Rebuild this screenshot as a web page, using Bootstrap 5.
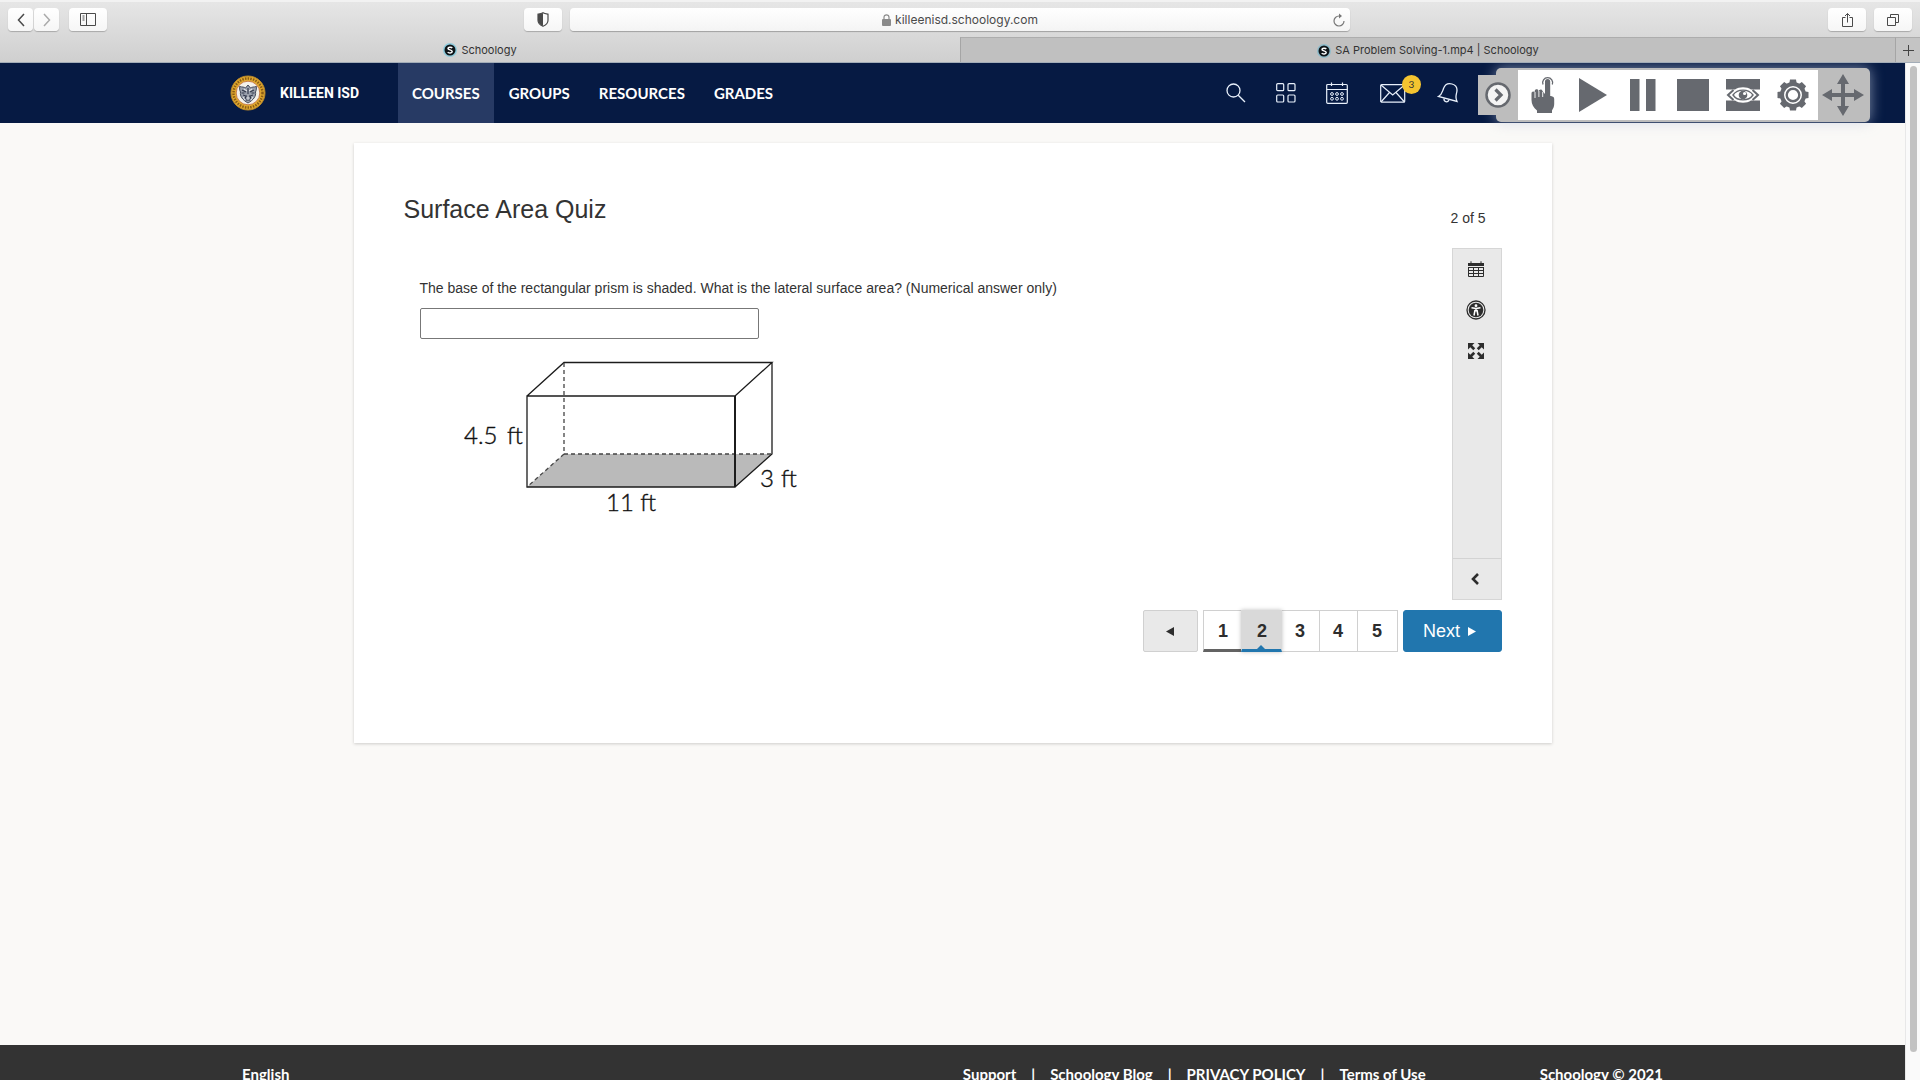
<!DOCTYPE html>
<html lang="en">
<head>
<meta charset="utf-8">
<meta name="viewport" content="width=device-width, initial-scale=1">
<title>Schoology</title>
<link href="https://cdn.jsdelivr.net/npm/bootstrap@5.3.0/dist/css/bootstrap.min.css" rel="stylesheet">
<style>
  body { font-family: "Liberation Sans", Arial, sans-serif; background: #faf9f7; color: #333; }
  button { font-family: inherit; }
  svg { display: block; flex: none; }

  /* Browser chrome */
  .chrome { font-family: Inter, "Liberation Sans", sans-serif; background: linear-gradient(#e6e6e6, #cfcfcf); border-bottom: 1px solid #a3adb8; border-top: 2px solid #f2f2f2; }
  .chrome-bar { height: 35px; padding: 0 8px; }
  .chrome-side { flex: 1 1 0; }
  .chrome-btn { height: 23px; border: 0; border-radius: 4px; padding: 0; background: linear-gradient(#fff, #f6f6f6); box-shadow: 0 1px 1px #a8a8a8; color: #4a4a4a; display: flex; align-items: center; justify-content: center; width: 38px; }
  .chrome-btn.step { width: 25px; margin-right: 1px; }
  .chrome-btn.panel { margin-left: 9px; }
  .address { width: 41%; height: 23px; border-radius: 4px; background: linear-gradient(#fff, #f4f4f4); box-shadow: 0 1px 1px #a0a0a0; font-size: 12px; color: #4a4a4a; }
  .address a { color: inherit; }
  .tabs { height: 25px; font-size: 11px; }
  .tabs a { color: #333; padding-top: 1px; }
  .tab-on { width: 50%; }
  .tab-off { background: #c0c0c0; border-left: 1px solid #a5a5a5; border-top: 1px solid #adadad; }
  .tab-add { width: 25px; background: #c4c4c4; border: 0; border-top: 1px solid #adadad; border-left: 1px solid #a5a5a5; color: #444; padding: 0; }

  /* Page area and its scrollbar */
  .app { height: 100vh; }
  .track { width: 15px; background: #fafafa; border-left: 1px solid #e8e8e8; padding: 3px 3px 28px 4px; }
  .thumb { background: #c2c2c2; border-radius: 4px; height: 100%; }

  /* Site header */
  .site-head { background: #061a43; height: 60px; font-family: Lato, "Open Sans", sans-serif; font-size: 15px; font-weight: 700; }
  .site-head .inner { width: 1445px; max-width: 100%; }
  .brand { color: #fff; font-family: Roboto, sans-serif; font-size: 14px; width: 168px; gap: 14px; }
  .site-head .nav-link { color: #fff; padding: 0 14px; display: flex; align-items: center; }
  .site-head .nav-link.active { background: #273a64; }
  .site-head .nav { gap: 1px; }
  .tool-icons { margin-right: 216px; gap: 30px; }
  .tool-icons button { border: 0; background: none; padding: 0; color: #e8f0fb; }
  .tool-icons .mail { margin: 0 1px 0 2px; }
  .count { width: 19px; height: 19px; border-radius: 50%; background: #f4c430; color: #333; font-size: 10px; top: -9px; right: -15px; }

  /* Floating playback palette */
  .palette { right: 35px; top: 5px; height: 54px; border-radius: 5px; background: #bdbdbd; box-shadow: 0 0 14px rgba(190,200,220,.65); color: #66696f; z-index: 5; }
  .palette button { border: 0; padding: 0; color: inherit; width: 50px; height: 50px; background: #fff; display: flex; align-items: center; justify-content: center; }
  .palette .fold { width: 40px; height: 40px; background: #bdbdbd; margin-left: -18px; }
  .palette .drag { width: 52px; background: transparent; padding-right: 2px; }

  /* Quiz */
  .stage { height: calc(100vh - 158px); padding-top: 20px; }
  .quiz { width: 1198px; max-width: 100%; min-height: 600px; background: #fff; box-shadow: 0 1px 3px rgba(0,0,0,.18); padding: 50px 50px 0; }
  .quiz h1 { font-size: 25px; line-height: 32px; font-weight: 400; }
  .counter { font-size: 14px; line-height: 20px; padding: 15px 16px 0 0; }
  .question { padding: 53px 0 0 16px; font-size: 14px; line-height: 20px; }
  .answer { width: 339px; height: 31px; border: 1px solid #777; border-radius: 2px; margin-top: 10px; }
  .rail { width: 50px; height: 352px; background: #e9e9e9; border: 1px solid #d6d6d6; margin-top: 20px; }
  .rail button { border: 0; background: none; width: 46px; height: 41px; padding: 0 0 2px; display: flex; align-items: center; justify-content: center; color: #2d2d2d; }
  .rail .collapse-btn { border-top: 1px solid #d3d3d3; width: 48px; padding: 0 3px 0 0; }
  .pager { gap: 5px; margin-top: 10px; }
  .pager button { height: 42px; border: 1px solid #d0d0d0; background: #fff; font-size: 18px; color: #2d2d2d; padding: 0; }
  .pager .prev { width: 55px; background: #e9e9e9; border-radius: 2px; }
  .pager .next { width: 99px; background: #2176ae; border-color: #2176ae; color: #fff; border-radius: 3px; gap: 8px; padding-right: 5px; }
  .pager .num { width: 39px; font-weight: 700; margin-right: -1px; }
  .pager .num:last-child { width: 41px; margin-right: 0; }
  .pager .seen { border-bottom: 3px solid #636363; padding: 2px 0 0 2px; }
  .pager .now { width: 41px; background: #d9d9d9; border-color: #d9d9d9; border-bottom: 3px solid #2176ae; padding: 2px 0 0 2px; box-shadow: 0 0 4px rgba(0,0,0,.25); }
  .pager .now::after { content: ""; position: absolute; left: 50%; bottom: 0; margin-left: -4px; border: 4px solid transparent; border-top: 0; border-bottom-color: #2176ae; }

  /* Footer */
  .site-foot { background: #333; padding-top: 19px; height: 80px; font-family: Lato, "Open Sans", sans-serif; font-size: 15px; line-height: 20px; font-weight: 700; color: #fff; }
  .site-foot .inner { width: 1421px; max-width: 100%; }
  .site-foot a { color: inherit; }
  .foot-links { gap: 15px; margin-right: 114px; }
</style>
</head>
<body>
<div class="app d-flex flex-column overflow-hidden">

  <header class="chrome flex-shrink-0">
    <div class="chrome-bar d-flex align-items-center gap-2">
      <div class="chrome-side d-flex align-items-center">
        <button class="chrome-btn step" aria-label="Back"><svg width="8" height="14" fill="none" stroke="currentColor" stroke-width="1.500"><path d="M7 1 1.500 7 7 13"/></svg></button>
        <button class="chrome-btn step" aria-label="Forward"><svg width="8" height="14" fill="none" stroke="#aaa" stroke-width="1.500"><path d="M1 1 6.500 7 1 13"/></svg></button>
        <button class="chrome-btn panel" aria-label="Show sidebar"><svg width="16" height="13" fill="none" stroke="currentColor"><path d="M.5.5h15v12H.5zM6.500.5v12M2.500 3h2M2.500 5h2M2.500 7h2"/></svg></button>
        <button class="chrome-btn ms-auto" aria-label="Privacy report"><svg width="12" height="15" viewBox="0 0 12 15"><path d="M6 .8C4.500 1.800 2.500 2 1 2.200v6C1 11 3.500 13.200 6 14.300c2.500-1.100 5-3.300 5-6.100v-6C9.500 2 7.500 1.800 6 .8z" fill="none" stroke="currentColor" stroke-width="1.200"/><path d="M6 1v13C3.500 13 1 11 1 8.200v-6C2.500 2 4.500 1.800 6 1z" fill="currentColor"/></svg></button>
      </div>
      <div class="address d-flex align-items-center justify-content-center position-relative">
        <svg width="9" height="12" class="me-1"><rect y="5" width="9" height="7" rx="1" fill="#8a8a8a"/><path d="M2 5.500V3.300a2.500 2.500 0 0 1 5 0v2.200" fill="none" stroke="#8a8a8a" stroke-width="1.200"/></svg>
        <a href="#" class="text-decoration-none">killeenisd.schoology.com</a>
        <button class="border-0 bg-transparent p-0 position-absolute end-0 me-1" aria-label="Reload"><svg width="14" height="14" fill="none" stroke="#777" stroke-width="1.200"><path d="M12 8A5 5 0 1 1 7 3h2"/><path d="M7 .5 10 3 7 5.500z" fill="#777" stroke="none"/></svg></button>
      </div>
      <div class="chrome-side d-flex justify-content-end gap-2">
        <button class="chrome-btn" aria-label="Share"><svg width="13" height="16" fill="none" stroke="currentColor"><path d="M4.500 5.500h-3v9h10v-9h-3M6.500 10.500V1.500M4 4l2.500-2.500L9 4"/></svg></button>
        <button class="chrome-btn" aria-label="Tab overview"><svg width="14" height="14" fill="none" stroke="currentColor"><path d="M1.500 4.500h8v8h-8zM4.500 4.500v-3h8v8h-3"/></svg></button>
      </div>
    </div>
    <nav class="tabs d-flex" aria-label="Browser tabs">
      <a href="#" class="tab-on text-decoration-none d-flex align-items-center justify-content-center">
        <svg width="14" height="14" class="me-1" viewBox="0 0 14 14"><circle cx="7" cy="7" r="7" fill="#8fcbdc"/><circle cx="7" cy="7" r="5.500" fill="#0d1418"/><path d="M9.200 5C8.500 3.800 5 3.800 5 5.500 5 7.200 9.200 6.500 9.200 8.500 9.200 10.300 5.500 10.300 4.800 9" fill="none" stroke="#fff" stroke-width="1.500"/></svg>
        <span>Schoology</span></a>
      <a href="#" class="tab-off text-decoration-none flex-fill d-flex align-items-center justify-content-center">
        <svg width="14" height="14" class="me-1" viewBox="0 0 14 14"><circle cx="7" cy="7" r="7" fill="#8fbccb"/><circle cx="7" cy="7" r="5.500" fill="#0d1418"/><path d="M9.200 5C8.500 3.800 5 3.800 5 5.500 5 7.200 9.200 6.500 9.200 8.500 9.200 10.300 5.500 10.300 4.800 9" fill="none" stroke="#fff" stroke-width="1.500"/></svg>
        <span>SA Problem Solving-1.mp4 | Schoology</span></a>
      <button class="tab-add d-flex align-items-center justify-content-center" aria-label="New tab"><svg width="11" height="11" stroke="currentColor"><path d="M0 5.500h11M5.500 0v11"/></svg></button>
    </nav>
  </header>

  <div class="d-flex flex-fill overflow-hidden">
    <div class="flex-fill position-relative overflow-hidden">

      <header class="site-head">
        <div class="inner mx-auto h-100 d-flex">
          <a href="#" class="brand d-flex align-items-center text-decoration-none">
            <svg width="36" height="36" viewBox="0 0 36 36">
              <circle cx="18" cy="18" r="17" fill="#e0a92e" stroke="#b9872a" stroke-width="1"/>
              <circle cx="18" cy="18" r="14.500" fill="none" stroke="#8a5c17" stroke-width="2.500" stroke-dasharray="1.500 1.200"/>
              <circle cx="18" cy="18" r="11.800" fill="#f4f1ea" stroke="#c06a3a" stroke-width=".8"/>
              <path d="M9.500 11.500c3 .8 4.500.3 6 1.500L18 10l2.500 3c1.500-1.200 3-.7 6-1.500-.3 2 .2 3-1 5.500.8 4-2 8-7.500 11-5.500-3-8.300-7-7.500-11-1.200-2.500-.7-3.500-1-5.500z" fill="#9aa0ac" stroke="#454b5c"/>
              <path d="M12 15l4 2M24 15l-4 2M18 13v6M13 20l3 1-1 3M23 20l-3 1 1 3M15.500 21h5M16 25h4M11.500 18h3M21.500 18h3" stroke="#30364a" stroke-width="1.100" fill="none"/>
              <path d="M14 14l3 2M22 14l-3 2M18 20v5M13 22l2 3M23 22l-2 3" stroke="#fff" stroke-width=".8"/>
            </svg>
            <span>KILLEEN ISD</span>
          </a>
          <nav class="nav h-100">
            <a class="nav-link active" href="#">COURSES</a>
            <a class="nav-link" href="#">GROUPS</a>
            <a class="nav-link" href="#">RESOURCES</a>
            <a class="nav-link" href="#">GRADES</a>
          </nav>
          <div class="tool-icons ms-auto d-flex align-items-center">
            <button aria-label="Search"><svg width="20" height="20" fill="none" stroke="currentColor" stroke-width="1.300"><circle cx="7.500" cy="7.500" r="6.500"/><path d="M12.200 12.200 19 19"/></svg></button>
            <button aria-label="Apps"><svg width="20" height="20" fill="none" stroke="currentColor" stroke-width="1.200"><rect x=".7" y=".7" width="7" height="7" rx="1"/><rect x="12" y=".7" width="7" height="7" rx="1"/><rect x=".7" y="12" width="7" height="7" rx="1"/><rect x="12" y="12" width="7" height="7" rx="1"/></svg></button>
            <button aria-label="Calendar"><svg width="22" height="22" fill="none" stroke="currentColor" stroke-width="1.200"><rect x=".7" y="2.500" width="20.600" height="18.800" rx="1"/><path d="M.7 7.500h20.600M5.500.5v3.500M16.500.5v3.500"/><g stroke-width="1"><circle cx="6" cy="12" r="1.400"/><circle cx="11" cy="12" r="1.400"/><circle cx="16" cy="12" r="1.400"/><circle cx="6" cy="16.800" r="1.400"/><circle cx="11" cy="16.800" r="1.400"/><circle cx="16" cy="16.800" r="1.400"/></g></svg></button>
            <button class="mail position-relative" aria-label="Messages, 3 unread"><svg width="26" height="19" fill="none" stroke="currentColor" stroke-width="1.200"><rect x=".7" y=".7" width="24" height="17.500" rx="1"/><path d="M1 1l11.700 10L24.500 1M1 18l8.500-9.500M24.500 18 16 8.500"/></svg><span class="count position-absolute d-flex align-items-center justify-content-center">3</span></button>
            <button aria-label="Notifications"><svg width="22" height="22" viewBox="0 0 22 22" fill="none" stroke="currentColor" stroke-width="1.300"><path d="M1.500 14.500C5 12.500 5 10.500 6.500 6.500 8 2.500 11.500 1 15 2c3.800 1 5.500 4.200 4.800 8-.8 4-1.800 5.500.2 9.500z"/><path d="M7 16.500c-.3 3.500 3.500 4.500 5 1.500"/></svg></button>
          </div>
        </div>
      </header>

      <div class="palette position-absolute d-flex align-items-center" role="toolbar" aria-label="Playback">
        <button class="fold" aria-label="Collapse"><svg width="26" height="26" fill="#f4f4f4" stroke="currentColor" stroke-width="2.500"><circle cx="13" cy="13" r="11.500"/><path d="M10.500 7.500 16 13l-5.500 5.500" fill="none" stroke-width="3.200"/></svg></button>
        <button aria-label="Touch"><svg width="26" height="38" viewBox="0 0 26 38" fill="currentColor"><path d="M15 18V5.500a2.600 2.600 0 0 1 5.200 0V20c2 .2 4 .5 4 3v5c0 3-1.200 4.500-2.200 6.500V37H7v-2.500C3.500 32 1.500 28 1.500 24v-6.500c0-1.200.6-2 1.800-2l1.400.5v-1c.3-2.200 3.200-2.200 3.700-.3l.4.8c.2-2.500 3.300-2.700 3.800-.2z"/><path d="M5 16v6M8.900 15v6M12.700 16v5" stroke="#fff" stroke-width=".9"/><path d="M13 8.500a5 5 0 1 1 9.300 0" fill="none" stroke="currentColor" stroke-width="1.300"/></svg></button>
        <button aria-label="Play"><svg width="28" height="34" fill="currentColor"><path d="M0 0 28 17 0 34z"/></svg></button>
        <button aria-label="Pause"><svg width="26" height="32" fill="currentColor"><path d="M0 0h9.500v32H0zM16 0h9.500v32H16z"/></svg></button>
        <button aria-label="Stop"><svg width="32" height="32" fill="currentColor"><path d="M0 0h32v32H0z"/></svg></button>
        <button aria-label="Watch"><svg width="34" height="32"><path d="M0 0h34v32H0z" fill="currentColor"/><path d="M0 10.500h9c4-3 12-3 16 0h9v11h-9c-4 3-12 3-16 0H0z" fill="#fff"/><path d="M7.500 11 2 16l5.500 5M26.500 11l5.500 5-5.500 5" fill="none" stroke="currentColor" stroke-width="2"/><path d="M7 16c4.500-6.500 15.500-6.500 20 0-4.500 6.500-15.500 6.500-20 0z" fill="#fff" stroke="currentColor" stroke-width="1.400"/><circle cx="17" cy="16" r="4.300" fill="currentColor"/><circle cx="18.600" cy="14.500" r="1.600" fill="#fff"/></svg></button>
        <button aria-label="Settings"><svg width="32" height="32" viewBox="-16 -16 32 32"><g fill="none" stroke="currentColor"><circle r="11" stroke-width="4"/><circle r="6.300" stroke-width="2.400"/></g><g fill="currentColor"><path id="t" d="M-3.800-11-3-15.500h6L3.800-11zM-3.800 11-3 15.500h6L3.800 11z"/><use href="#t" transform="rotate(45)"/><use href="#t" transform="rotate(90)"/><use href="#t" transform="rotate(135)"/></g></svg></button>
        <button class="drag" aria-label="Move"><svg width="42" height="42" viewBox="-21 -21 42 42" fill="currentColor"><path d="M-2-12h4v24h-4zM-12-2h24v4h-24z"/><path d="M0-21 6-11H-6zM0 21 6 11H-6zM-21 0-11-6V6zM21 0 11-6V6z"/></svg></button>
      </div>

      <main class="stage">
        <section class="quiz mx-auto">
          <div class="d-flex justify-content-between">
            <div>
              <h1 class="m-0">Surface Area Quiz</h1>
              <div class="question">
                <label for="answer" class="d-block">The base of the rectangular prism is shaded. What is the lateral surface area? (Numerical answer only)</label>
                <input id="answer" type="text" class="answer d-block">
                <svg width="360" height="180" viewBox="420 339 360 180" role="img" aria-label="Rectangular prism with shaded base" overflow="visible">
                  <path d="M527 487 564 454H772L735 487z" fill="#bababa"/>
                  <g fill="none" stroke="#1c1c1c" stroke-width="1.300"><path d="M527 396H735V487H527zM527 396 564 362.500H772L735 396M772 362.500V454L735 487"/><path d="M564 363V454M564 454H772M564 454 527 487" stroke-dasharray="4 3" stroke="#444"/><path d="M735 396V487" stroke-width="2"/></g>
                  <g font-family="Lato, sans-serif" font-weight="300" font-size="24" fill="#111" stroke="#111" stroke-width=".4"><text x="464" y="444">4.5<tspan x="507">ft</tspan></text><text x="606" y="511">11 ft</text><text x="760" y="487">3<tspan x="781">ft</tspan></text></g>
                </svg>
              </div>
            </div>
            <div class="d-flex flex-column align-items-end">
              <div class="counter">2 of 5</div>
              <div class="rail d-flex flex-column">
                <button aria-label="Calendar"><svg width="16" height="16" fill="currentColor"><path d="M0 2h2.500V.3h1V2h9V.3h1V2H16v3H0z"/><path d="M.5 6v9.500h15V6M.5 6.500h15M.5 9.500h15M.5 12.500h15M5.500 6v9.500M10.500 6v9.500" fill="none" stroke="currentColor"/></svg></button>
                <button aria-label="Accessibility"><svg width="20" height="20" viewBox="-10 -10 20 20"><circle r="9" fill="#e9e9e9" stroke="currentColor" stroke-width="1.300"/><circle r="7.300" fill="currentColor"/><circle cy="-4.300" r="1.400" fill="#fff"/><path d="M-4.500-2.200 0-1.600l4.500-.6M0-1.500V1.500M-1 0-2 5.500M1 0 2 5.500" stroke="#fff" stroke-width="1.500" fill="none"/></svg></button>
                <button aria-label="Full screen"><svg width="16" height="16" viewBox="-8 -8 16 16" fill="currentColor"><path id="a" d="M-8-8h6.500L-3.800-5.700-.8-2.700l-1.900 1.900-3-3L-8-1.500z"/><use href="#a" transform="rotate(90)"/><use href="#a" transform="rotate(180)"/><use href="#a" transform="rotate(270)"/></svg></button>
                <button class="collapse-btn mt-auto" aria-label="Collapse"><svg width="8" height="12" fill="none" stroke="currentColor" stroke-width="2.600"><path d="M7 1 2 6l5 5"/></svg></button>
              </div>
            </div>
          </div>
          <nav class="pager d-flex justify-content-end" aria-label="Questions">
            <button class="prev d-flex align-items-center justify-content-center" aria-label="Previous"><svg width="8" height="9" fill="currentColor"><path d="M8 0v9L0 4.500z"/></svg></button>
            <div class="d-flex">
              <button class="num seen">1</button>
              <button class="num now position-relative">2</button>
              <button class="num">3</button>
              <button class="num">4</button>
              <button class="num">5</button>
            </div>
            <button class="next d-flex align-items-center justify-content-center">Next <svg width="8" height="9" fill="currentColor"><path d="M0 0v9l8-4.500z"/></svg></button>
          </nav>
        </section>
      </main>

      <footer class="site-foot">
        <div class="inner mx-auto d-flex">
          <a href="#" class="text-decoration-none me-auto">English</a>
          <div class="foot-links d-flex">
            <a href="#" class="text-decoration-none">Support</a><span>|</span>
            <a href="#" class="text-decoration-none">Schoology Blog</a><span>|</span>
            <a href="#" class="text-decoration-none">PRIVACY POLICY</a><span>|</span>
            <a href="#" class="text-decoration-none">Terms of Use</a>
          </div>
          <span>Schoology © 2021</span>
        </div>
      </footer>
    </div>
    <div class="track flex-shrink-0"><div class="thumb"></div></div>
  </div>
</div>
<script src="https://cdn.jsdelivr.net/npm/bootstrap@5.3.0/dist/js/bootstrap.bundle.min.js"></script>
</body>
</html>
